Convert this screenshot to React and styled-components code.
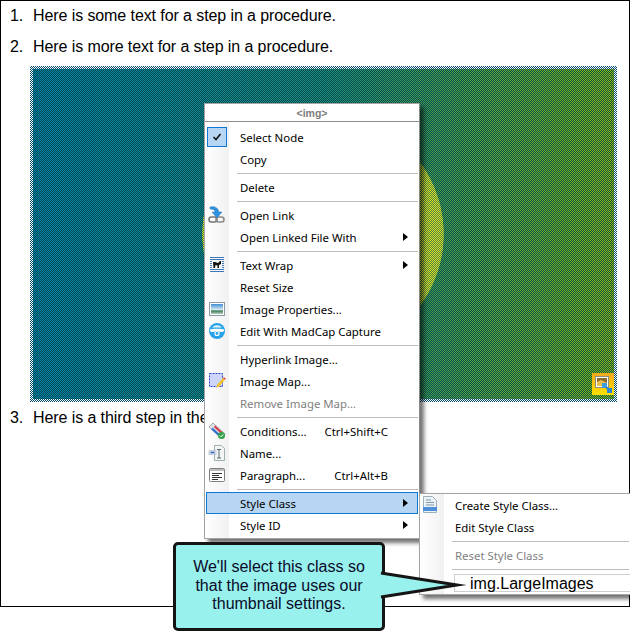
import React from "react";
import styled, { createGlobalStyle } from "styled-components";

const GlobalStyle = createGlobalStyle`
  html, body {
    margin: 0;
    padding: 0;
    background: #fff;
  }
`;

const Page = styled.div`
  position: relative;
  width: 630px;
  height: 639px;
  overflow: hidden;
  font-family: "Liberation Sans", Arial, sans-serif;
  color: #000;
`;

const Frame = styled.div`
  box-sizing: border-box;
  width: 630px;
  height: 607px;
  border: 1px solid #000;
  padding: 5px 0 0 9px;
`;

const Step = styled.div`
  display: flex;
  font-size: 16px;
  line-height: 19px;
  letter-spacing: -0.09px;
  margin-bottom: ${(p) => p.$gap || 0}px;
  span:first-child {
    width: 23px;
    flex: none;
  }
`;

const checker = (color) =>
  `repeating-conic-gradient(${color} 0 25%, transparent 0 50%) 0 0 / 2px 2px`;

const Picture = styled.div`
  position: relative;
  box-sizing: border-box;
  width: 587px;
  height: 336px;
  margin: 10px 0 6px 20px;
  padding: 3px;
  background: ${checker("#004a70")}, #fff;
`;

const PictureFill = styled.div`
  width: 100%;
  height: 100%;
  background:
    radial-gradient(circle 121px at 290px 165px, rgba(205, 215, 75, 0.32) 99.5%, transparent 100%),
    ${checker("#004a50")},
    radial-gradient(circle 121px at 290px 165px, #f2f000 99.5%, transparent 100%),
    linear-gradient(90deg, #0082ae, #1f8f7c 50%, #92c000);
`;

const ThumbBadge = styled.svg`
  position: absolute;
  right: 3px;
  bottom: 7px;
  width: 22px;
  height: 22px;
`;

const Menu = styled.div`
  position: absolute;
  left: 204px;
  top: 103px;
  width: 216px;
  box-sizing: border-box;
  border: 1px solid #a4a4a4;
  border-right-color: #8a8a8a;
  background: #fff;
  box-shadow: 4px 4px 4px rgba(0, 0, 0, 0.55);
  font-family: "Noto Sans", sans-serif;
  font-size: 11.4px;
  z-index: 1;
`;

const MenuTitle = styled.div`
  height: 17px;
  border-bottom: 1px solid #8f8f8f;
  text-align: center;
  font: bold 10.5px/19px "Liberation Sans", sans-serif;
  color: #7d7d7d;
`;

const MenuBody = styled.div`
  padding: ${(p) => (p.$sub ? "0 0 2px" : "4px 0 2px")};
  background: linear-gradient(90deg, #fff, #f1f1f1 24px, #fff 24px);
`;

const Item = styled.div`
  box-sizing: border-box;
  height: 22px;
  margin: 0 1px;
  display: grid;
  grid-template-columns: 34px 1fr auto 30px;
  align-items: center;
  color: ${(p) => (p.$disabled ? "#7f7f7f" : "#000")};
  background: ${(p) => (p.$active ? "#b6d6f3" : "transparent")};
  outline: ${(p) => (p.$active ? "1px solid #0f78d6" : "none")};
  outline-offset: -1px;
`;

const IconSlot = styled.span`
  display: flex;
  align-items: center;
  padding-left: 2px;
  height: 22px;
`;

const Arrow = styled.span`
  justify-self: end;
  margin-right: 10px;
  width: 0;
  height: 0;
  border-left: 5px solid #000;
  border-top: 4.5px solid transparent;
  border-bottom: 4.5px solid transparent;
`;

const Separator = styled.div`
  height: 1px;
  margin: 2.5px 1px 2.5px ${(p) => p.$left || 32}px;
  background: #bdbdbd;
`;

const CheckBox = styled.span`
  box-sizing: border-box;
  width: 20px;
  height: 20px;
  margin-left: -1px;
  border: 1px solid #0f78d6;
  background: #b6d6f3;
  display: flex;
  align-items: center;
  justify-content: center;
`;

const SubMenu = styled.div`
  position: absolute;
  left: 419px;
  top: 493px;
  width: 211px;
  box-sizing: border-box;
  border: 1px solid #a4a4a4;
  border-right: none;
  background: #fff;
  box-shadow: 4px 4px 4px rgba(0, 0, 0, 0.55);
  font-family: "Noto Sans", sans-serif;
  font-size: 11.4px;
  z-index: 2;
`;

const SubItem = styled(Item)`
  margin: 0;
  grid-template-columns: 35px 1fr;
`;

const LargeRow = styled.div`
  box-sizing: border-box;
  height: 18px;
  margin: 4px 0 0 34px;
  padding-left: 15px;
  border: 1px solid #cfcfcf;
  border-right: none;
  font: 16px/17px "Liberation Sans", sans-serif;
`;

const Callout = styled.div`
  position: absolute;
  left: 173px;
  top: 542px;
  width: 212px;
  height: 89px;
  box-sizing: border-box;
  padding: 13px 14px 0;
  border: 3px solid #151515;
  border-radius: 5px;
  background: #98f1ec;
  font-size: 16px;
  line-height: 18.6px;
  text-align: center;
  color: #0a0a2a;
  z-index: 3;
`;

const Pointer = styled.svg`
  position: absolute;
  left: 205px;
  top: 26px;
  width: 90px;
  height: 32px;
  overflow: visible;
`;

const LinkIcon = () => (
  <svg width="18" height="18" viewBox="0 0 18 18">
    <rect x="1" y="11" width="8" height="5" rx="2.4" fill="none" stroke="#777" strokeWidth="1.6" />
    <rect x="8" y="11" width="8" height="5" rx="2.4" fill="none" stroke="#8a8a8a" strokeWidth="1.6" />
    <path d="M2 1c4-1 8 0 9 5h3l-5 6-5-6h3C7 4 5 3 2 3z" fill="#2f92dc" stroke="#1c6db5" strokeWidth=".4" />
  </svg>
);

const WrapIcon = () => (
  <svg width="18" height="18" viewBox="0 0 18 18">
    <path d="M2 1.5h14M2 15.5h14M2 13.5h14M2 3.5h14M2 5.5h2M14 5.5h2M2 7.5h2M14 7.5h2M2 9.5h2M14 9.5h2M2 11.5h2M14 11.5h2" stroke="#3d78b8" />
    <path d="M5 6h2l3 1 2-2h1v3l-2 1v3h-1.5V9.5L7.5 9 7 12H5.5z" fill="#111" />
  </svg>
);

const ImageIcon = () => (
  <svg width="18" height="18" viewBox="0 0 18 18">
    <defs>
      <linearGradient id="sky" x1="0" y1="0" x2="0" y2="1">
        <stop offset="0" stopColor="#3f8fd4" />
        <stop offset=".55" stopColor="#d5e6f2" />
        <stop offset=".7" stopColor="#3e7f58" />
        <stop offset="1" stopColor="#bcd0c0" />
      </linearGradient>
    </defs>
    <rect x="1.5" y="2.5" width="15" height="13" fill="#fff" stroke="#8c9aa6" />
    <rect x="3" y="4" width="12" height="10" fill="url(#sky)" />
  </svg>
);

const CaptureIcon = () => (
  <svg width="18" height="18" viewBox="0 0 18 18">
    <circle cx="9" cy="9" r="8" fill="#27a3ea" />
    <path d="M4 5.500a6.500 6.500 0 0 1 10 0z" fill="#e6f5fd" />
    <path d="M2 7.500c2-1 12-1 14 0v1.500c-1 1-2 1-3 1-2 0-2-1-4-1s-2 1-4 1c-1 0-2 0-3-1z" fill="#fff" />
    <circle cx="9" cy="11.500" r="2.600" fill="#fff" />
    <circle cx="9" cy="11.500" r="1.400" fill="#27a3ea" />
  </svg>
);

const MapIcon = () => (
  <svg width="18" height="18" viewBox="0 0 18 18">
    <rect x="1.5" y="1.5" width="13" height="13" fill="#cdd5f8" stroke="#2a45c8" strokeDasharray="2 1" />
    <path d="M9 13l6-7 2 1.800-6 7-2.600.8z" fill="#f2c230" />
    <path d="M15 6l.8-1 2 1.800-.8 1z" fill="#d8433a" />
  </svg>
);

const TagsIcon = () => (
  <svg width="18" height="18" viewBox="0 0 18 18">
    <path d="M1 5l4-4 12 11-4 4z" fill="#dfe3ea" stroke="#8f949c" strokeWidth=".8" />
    <path d="M4 6.500l7 6.500" stroke="#2f6fd0" strokeWidth="2.200" />
    <path d="M6.500 4.200l7 6.500" stroke="#d93f48" strokeWidth="2.200" />
    <circle cx="13.500" cy="13.500" r="3.500" fill="#33a34a" />
    <path d="M11.800 13.500l1.300 1.300 2.200-2.400" fill="none" stroke="#fff" strokeWidth="1" />
  </svg>
);

const NameIcon = () => (
  <svg width="18" height="18" viewBox="0 0 18 18">
    <path d="M6.500 1.500h7l3 3v12h-10z" fill="#f4f6f6" stroke="#9fb0b4" />
    <path d="M1 6.500h7v4H1z" fill="#dfe5ee" stroke="#a9b4c2" strokeWidth=".6" />
    <path d="M2.500 8.500h4" stroke="#2e5fc0" strokeWidth="1.500" />
    <path d="M9 5.500h4M11 5.500v8.500M9 14h4" stroke="#5a6b70" fill="none" />
  </svg>
);

const ParagraphIcon = () => (
  <svg width="18" height="18" viewBox="0 0 18 18">
    <rect x="1.500" y="2.500" width="15" height="13" rx="1" fill="#fff" stroke="#7f7f7f" />
    <rect x="2" y="3" width="14" height="2" fill="#bdbdbd" />
    <path d="M4 7.500h10M4 9.500h7M4 11.500h10M4 13.500h6" stroke="#333" />
  </svg>
);

const StyleDocIcon = () => (
  <svg width="16" height="18" viewBox="0 0 16 18">
    <path d="M1.500 .5h9l4 4v12h-13z" fill="#edf2f5" stroke="#9db0bd" />
    <path d="M4 4h5M4 6.500h8M4 9h8" stroke="#7e97a8" />
    <rect x="1" y="11" width="14" height="4" fill="#4d8fd8" />
  </svg>
);

const CheckIcon = () => (
  <svg width="10" height="10" viewBox="0 0 10 10">
    <path d="M1.500 5l2.500 2.500L8.500 2" fill="none" stroke="#111" strokeWidth="1.600" />
  </svg>
);

const MENU = [
  { label: "Select Node", checked: true },
  { label: "Copy" },
  { sep: true },
  { label: "Delete" },
  { sep: true },
  { label: "Open Link", icon: <LinkIcon /> },
  { label: "Open Linked File With", sub: true },
  { sep: true },
  { label: "Text Wrap", icon: <WrapIcon />, sub: true },
  { label: "Reset Size" },
  { label: "Image Properties...", icon: <ImageIcon /> },
  { label: "Edit With MadCap Capture", icon: <CaptureIcon /> },
  { sep: true },
  { label: "Hyperlink Image..." },
  { label: "Image Map...", icon: <MapIcon /> },
  { label: "Remove Image Map...", disabled: true },
  { sep: true },
  { label: "Conditions...", icon: <TagsIcon />, keys: "Ctrl+Shift+C" },
  { label: "Name...", icon: <NameIcon /> },
  { label: "Paragraph...", icon: <ParagraphIcon />, keys: "Ctrl+Alt+B" },
  { sep: true },
  { label: "Style Class", sub: true, active: true },
  { label: "Style ID", sub: true },
];

const App = () => (
  <Page>
    <GlobalStyle />
    <Frame>
      <Step $gap={12}>
        <span>1.</span>
        <span>Here is some text for a step in a procedure.</span>
      </Step>
      <Step>
        <span>2.</span>
        <span>Here is more text for a step in a procedure.</span>
      </Step>
      <Picture>
        <PictureFill />
        <ThumbBadge viewBox="0 0 22 22">
          <defs>
            <linearGradient id="badge" x1="0" y1="0" x2="0" y2="1">
              <stop offset="0" stopColor="#f2a81e" />
              <stop offset="1" stopColor="#ffe000" />
            </linearGradient>
          </defs>
          <rect width="22" height="22" fill="url(#badge)" />
          <rect x="3.500" y="3.500" width="13" height="11" fill="#fff" stroke="#8a8f80" />
          <rect x="5" y="5" width="10" height="8" fill="#8a6a2c" />
          <path d="M5 9l4-2 6 3v3H5z" fill="#e8c050" />
          <rect x="10" y="10" width="5" height="5" fill="#3e9ade" />
          <rect x="15" y="15" width="5" height="5" fill="#2a86d0" />
          <path d="M14 14l3 3" stroke="#2a86d0" strokeWidth="2" />
        </ThumbBadge>
      </Picture>
      <Step>
        <span>3.</span>
        <span>Here is a third step in the procedure.</span>
      </Step>
    </Frame>

    <Menu>
      <MenuTitle>&lt;img&gt;</MenuTitle>
      <MenuBody>
        {MENU.map((m, i) =>
          m.sep ? (
            <Separator key={i} />
          ) : (
            <Item key={i} $disabled={m.disabled} $active={m.active}>
              <IconSlot>
                {m.checked ? (
                  <CheckBox>
                    <CheckIcon />
                  </CheckBox>
                ) : (
                  m.icon
                )}
              </IconSlot>
              <span>{m.label}</span>
              <span>{m.keys}</span>
              {m.sub ? <Arrow /> : <span />}
            </Item>
          )
        )}
      </MenuBody>
    </Menu>

    <SubMenu>
      <MenuBody $sub>
        <SubItem>
          <IconSlot>
            <StyleDocIcon />
          </IconSlot>
          <span>Create Style Class...</span>
        </SubItem>
        <SubItem>
          <span />
          <span>Edit Style Class</span>
        </SubItem>
        <Separator $left={32} />
        <SubItem $disabled>
          <span />
          <span>Reset Style Class</span>
        </SubItem>
        <Separator $left={32} />
        <LargeRow>img.LargeImages</LargeRow>
      </MenuBody>
    </SubMenu>

    <Callout>
      We'll select this class so that the image uses our thumbnail settings.
      <Pointer viewBox="0 0 90 32">
        <path
          d="M0 2L76 14L0 26"
          fill="#98f1ec"
          stroke="#151515"
          strokeWidth="3"
          strokeLinejoin="miter"
          strokeMiterlimit="12"
        />
      </Pointer>
    </Callout>
  </Page>
);

export default App;
